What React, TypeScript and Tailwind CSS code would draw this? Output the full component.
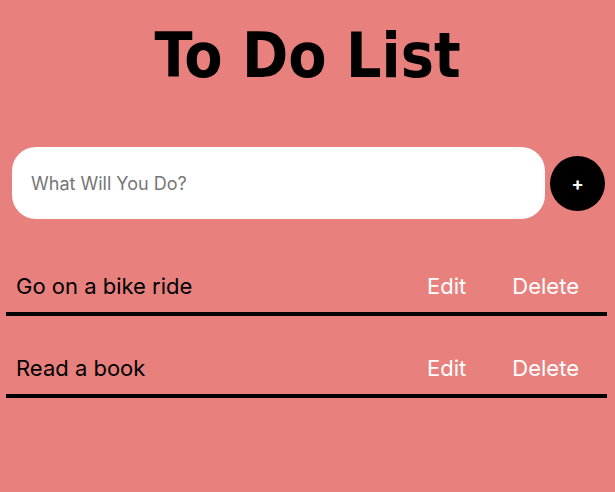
import React, { useState } from "react";

interface Todo {
  id: number;
  text: string;
}

const App: React.FC = () => {
  const [todos] = useState<Todo[]>([
    { id: 1, text: "Go on a bike ride" },
    { id: 2, text: "Read a book" },
  ]);
  const [value, setValue] = useState("");

  return (
    <div className="min-h-screen w-full bg-[#e8817e] pl-[6px] pr-[8px] font-['Inter',sans-serif]">
      <h1 className="pt-[18px] pl-[2px] text-center font-['DejaVu_Sans_Condensed','DejaVu_Sans',sans-serif] text-[62px] font-bold leading-[76px] text-black">
        To Do List
      </h1>
      <form
        className="mt-[53px] flex items-center gap-[5px] pl-[6px] pr-[2px]"
        onSubmit={(e) => e.preventDefault()}
      >
        <input
          className="h-[72px] flex-1 rounded-[24px] bg-white px-[19px] text-[18px] text-black outline-none placeholder:text-[#767676]"
          type="text"
          placeholder="What Will You Do?"
          value={value}
          onChange={(e) => setValue(e.target.value)}
        />
        <button
          type="submit"
          className="flex h-[55px] w-[55px] items-center justify-center rounded-full bg-black text-[18px] font-bold text-white"
        >
          +
        </button>
      </form>
      <ul className="mt-[45px]">
        {todos.map((todo) => (
          <li
            key={todo.id}
            className="mb-[30px] flex h-[52px] items-center border-b-4 border-black pb-[4px] pl-[10px] pr-[28px] text-[22px]"
          >
            <span className="flex-1 text-black">{todo.text}</span>
            <button className="mr-[46px] text-white">Edit</button>
            <button className="text-white">Delete</button>
          </li>
        ))}
      </ul>
    </div>
  );
};

export default App;
